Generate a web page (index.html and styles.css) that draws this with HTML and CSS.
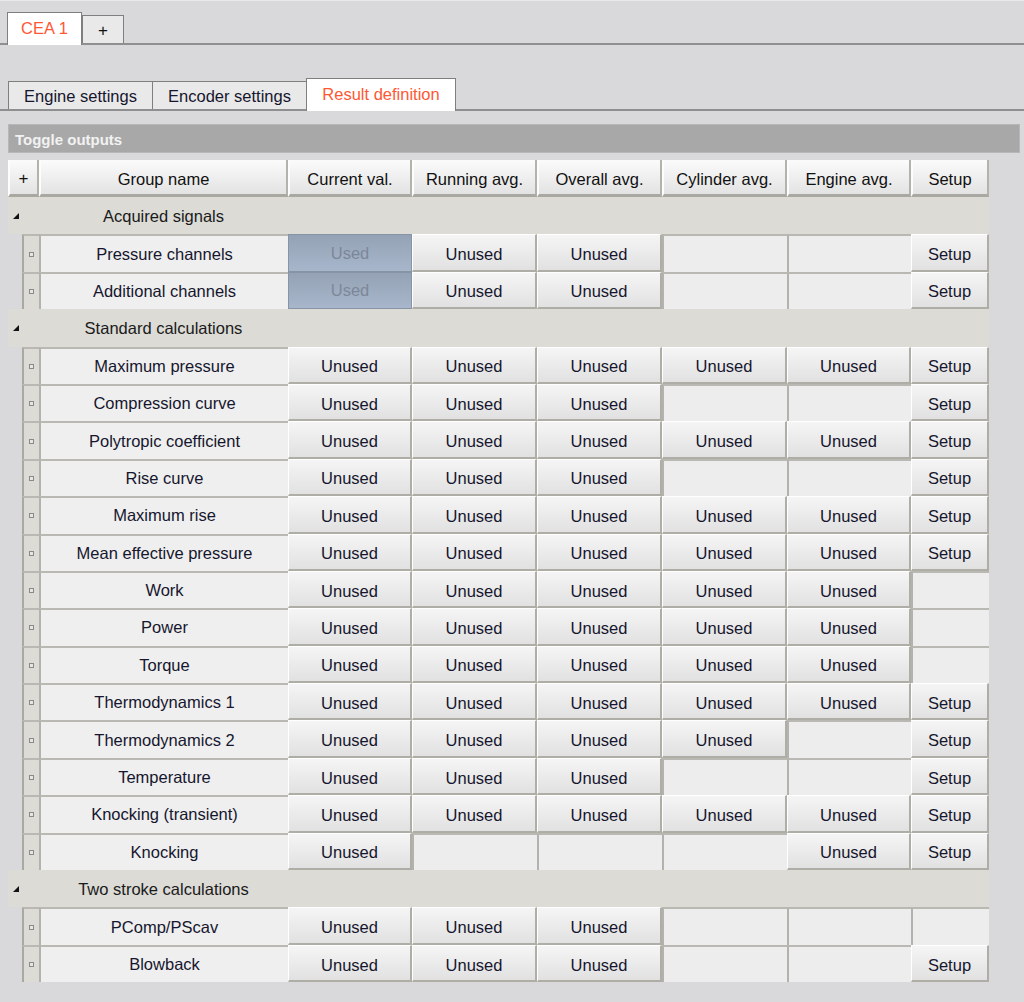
FILE: index.html
```html
<!DOCTYPE html>
<html>
<head>
<meta charset="utf-8">
<link rel="stylesheet" href="styles.css">
</head>
<body>
<div class="tabs1">
  <div class="tab1 active">CEA 1</div>
  <div class="tab1 plus">+</div>
</div>
<div class="tabs2">
  <div class="tab2 w1">Engine settings</div>
  <div class="tab2 w2">Encoder settings</div>
  <div class="tab2 w3 active">Result definition</div>
</div>
<div class="toggle">Toggle outputs</div>
<div class="grid">
  <div class="hd plus2">+</div>
  <div class="hd">Group name</div>
  <div class="hd">Current val.</div>
  <div class="hd">Running avg.</div>
  <div class="hd">Overall avg.</div>
  <div class="hd">Cylinder avg.</div>
  <div class="hd">Engine avg.</div>
  <div class="hd">Setup</div>

  <div class="group"><span class="tri"><svg width="8" height="8" viewBox="0 0 8 8"><polygon points="7,1 7,7 1,7" fill="#111"/></svg></span><span class="gname">Acquired signals</span></div>
  <div class="sp"></div><div class="ind"><i></i></div><div class="name">Pressure channels</div><div class="used">Used</div><div class="btn">Unused</div><div class="btn">Unused</div><div class="empty"></div><div class="empty"></div><div class="btn">Setup</div>
  <div class="sp"></div><div class="ind"><i></i></div><div class="name">Additional channels</div><div class="used">Used</div><div class="btn">Unused</div><div class="btn">Unused</div><div class="empty"></div><div class="empty"></div><div class="btn">Setup</div>

  <div class="group"><span class="tri"><svg width="8" height="8" viewBox="0 0 8 8"><polygon points="7,1 7,7 1,7" fill="#111"/></svg></span><span class="gname">Standard calculations</span></div>
  <div class="sp"></div><div class="ind"><i></i></div><div class="name">Maximum pressure</div><div class="btn">Unused</div><div class="btn">Unused</div><div class="btn">Unused</div><div class="btn">Unused</div><div class="btn">Unused</div><div class="btn">Setup</div>
  <div class="sp"></div><div class="ind"><i></i></div><div class="name">Compression curve</div><div class="btn">Unused</div><div class="btn">Unused</div><div class="btn">Unused</div><div class="empty"></div><div class="empty"></div><div class="btn">Setup</div>
  <div class="sp"></div><div class="ind"><i></i></div><div class="name">Polytropic coefficient</div><div class="btn">Unused</div><div class="btn">Unused</div><div class="btn">Unused</div><div class="btn">Unused</div><div class="btn">Unused</div><div class="btn">Setup</div>
  <div class="sp"></div><div class="ind"><i></i></div><div class="name">Rise curve</div><div class="btn">Unused</div><div class="btn">Unused</div><div class="btn">Unused</div><div class="empty"></div><div class="empty"></div><div class="btn">Setup</div>
  <div class="sp"></div><div class="ind"><i></i></div><div class="name">Maximum rise</div><div class="btn">Unused</div><div class="btn">Unused</div><div class="btn">Unused</div><div class="btn">Unused</div><div class="btn">Unused</div><div class="btn">Setup</div>
  <div class="sp"></div><div class="ind"><i></i></div><div class="name">Mean effective pressure</div><div class="btn">Unused</div><div class="btn">Unused</div><div class="btn">Unused</div><div class="btn">Unused</div><div class="btn">Unused</div><div class="btn">Setup</div>
  <div class="sp"></div><div class="ind"><i></i></div><div class="name">Work</div><div class="btn">Unused</div><div class="btn">Unused</div><div class="btn">Unused</div><div class="btn">Unused</div><div class="btn">Unused</div><div class="empty"></div>
  <div class="sp"></div><div class="ind"><i></i></div><div class="name">Power</div><div class="btn">Unused</div><div class="btn">Unused</div><div class="btn">Unused</div><div class="btn">Unused</div><div class="btn">Unused</div><div class="empty"></div>
  <div class="sp"></div><div class="ind"><i></i></div><div class="name">Torque</div><div class="btn">Unused</div><div class="btn">Unused</div><div class="btn">Unused</div><div class="btn">Unused</div><div class="btn">Unused</div><div class="empty"></div>
  <div class="sp"></div><div class="ind"><i></i></div><div class="name">Thermodynamics 1</div><div class="btn">Unused</div><div class="btn">Unused</div><div class="btn">Unused</div><div class="btn">Unused</div><div class="btn">Unused</div><div class="btn">Setup</div>
  <div class="sp"></div><div class="ind"><i></i></div><div class="name">Thermodynamics 2</div><div class="btn">Unused</div><div class="btn">Unused</div><div class="btn">Unused</div><div class="btn">Unused</div><div class="empty"></div><div class="btn">Setup</div>
  <div class="sp"></div><div class="ind"><i></i></div><div class="name">Temperature</div><div class="btn">Unused</div><div class="btn">Unused</div><div class="btn">Unused</div><div class="empty"></div><div class="empty"></div><div class="btn">Setup</div>
  <div class="sp"></div><div class="ind"><i></i></div><div class="name">Knocking (transient)</div><div class="btn">Unused</div><div class="btn">Unused</div><div class="btn">Unused</div><div class="btn">Unused</div><div class="btn">Unused</div><div class="btn">Setup</div>
  <div class="sp"></div><div class="ind"><i></i></div><div class="name">Knocking</div><div class="btn">Unused</div><div class="empty"></div><div class="empty"></div><div class="empty"></div><div class="btn">Unused</div><div class="btn">Setup</div>

  <div class="group"><span class="tri"><svg width="8" height="8" viewBox="0 0 8 8"><polygon points="7,1 7,7 1,7" fill="#111"/></svg></span><span class="gname">Two stroke calculations</span></div>
  <div class="sp"></div><div class="ind"><i></i></div><div class="name">PComp/PScav</div><div class="btn">Unused</div><div class="btn">Unused</div><div class="btn">Unused</div><div class="empty"></div><div class="empty"></div><div class="empty"></div>
  <div class="sp"></div><div class="ind"><i></i></div><div class="name">Blowback</div><div class="btn">Unused</div><div class="btn">Unused</div><div class="btn">Unused</div><div class="empty"></div><div class="empty"></div><div class="btn">Setup</div>
</div>
</body>
</html>
```
FILE: styles.css
```css
* { box-sizing: border-box; }
body {
  margin: 0;
  background: #d9d8da;
  font-family: "Liberation Sans", Arial, sans-serif;
  font-size: 16.5px;
  color: #16162e;
}
.tabs1 {
  display: flex;
  align-items: flex-end;
  height: 45px;
  padding-left: 7px;
  border-top: 1px solid #e9e9ea;
  border-bottom: 2px solid #8f8e91;
}
.tab1 {
  display: flex;
  align-items: center;
  justify-content: center;
  border: 1px solid #7f7f80;
  border-bottom: none;
  background: #e9e9e9;
  height: 28px;
  width: 42px;
  color: #111;
  font-size: 17px;
  padding-top: 3px;
}
.tab1.active {
  width: 75px;
  height: 33px;
  margin-bottom: -2px;
  padding-top: 0;
  padding-bottom: 2px;
  background: #fff;
  color: #ff5734;
  font-size: 16.5px;
}
.tabs2 {
  display: flex;
  align-items: flex-end;
  height: 66px;
  padding-left: 8px;
  border-bottom: 2px solid #8f8e91;
}
.tab2 {
  display: flex;
  align-items: center;
  justify-content: center;
  height: 28px;
  padding-top: 2px;
  border: 1px solid #7f7f80;
  border-bottom: none;
  border-right: none;
  background: #e9e9e9;
}
.tab2.w1 { width: 144px; }
.tab2.w2 { width: 154px; }
.tab2.w3 { width: 150px; }
.tab2.active {
  height: 33px;
  margin-bottom: -2px;
  padding-top: 0;
  padding-bottom: 2px;
  background: #fff;
  border-right: 1px solid #7f7f80;
  color: #ff5734;
}
.toggle {
  margin: 13px 4px 0 8px;
  height: 29px;
  background: #a8a8a8;
  border: 1px solid #b7b7b7;
  color: #f2f2f2;
  font-weight: bold;
  font-size: 15px;
  padding-left: 6px;
  padding-top: 1px;
  display: flex;
  align-items: center;
}
.grid {
  margin: 7px 0 0 8px;
  width: 981px;
  display: grid;
  grid-template-columns: 14px 17px 249px 124px 125px 125px 125px 124px 78px;
  grid-template-rows: 37px;
  grid-auto-rows: 37.4px;
}
.grid > div {
  display: flex;
  align-items: center;
  justify-content: center;
  white-space: nowrap;
}
.hd {
  background: linear-gradient(#fbfbfb, #e3e3e3);
  border-left: 2px solid #fdfdfd;
  border-right: 2px solid #b3b2ab;
  border-bottom: 3px solid #a9a8a1;
  padding-top: 4px;
  color: #111;
}
.hd.plus2 {
  grid-column: span 2;
  font-size: 17px;
}
.group {
  grid-column: 1 / -1;
  background: #dcdbd6;
  justify-content: flex-start !important;
  color: #1a1a1a;
  padding-top: 1px;
}
.tri {
  width: 31px;
  padding-left: 4px;
  display: flex;
  align-items: center;
}
.gname {
  width: 249px;
  text-align: center;
}
.sp { background: #d9d8da; }
.ind {
  background: #dcdbd6;
  border-left: 2px solid #a9a8a3;
  border-top: 2px solid #b9b8b3;
}
.ind i {
  display: block;
  width: 5px;
  height: 5px;
  border: 1px solid #8a8a88;
  background: #e6e6e6;
}
.name {
  background: #efefef;
  border-left: 2px solid #b3b2ad;
  border-top: 2px solid #b9b8b3;
}
.btn {
  background: linear-gradient(#f5f5f5, #e1e1e1);
  border-top: 1px solid #ffffff;
  border-left: 1px solid #ffffff;
  border-right: 2px solid #aeada6;
  border-bottom: 2px solid #aeada6;
  padding-top: 4px;
}
.empty {
  background: #ededed;
  border-left: 2px solid #b3b2ad;
  border-top: 2px solid #b9b8b3;
}
.used {
  background: linear-gradient(#95a2b5, #a7b6cb);
  border: 1px solid #8794a6;
  color: #7c8799;
  padding-top: 1px;
}
```
